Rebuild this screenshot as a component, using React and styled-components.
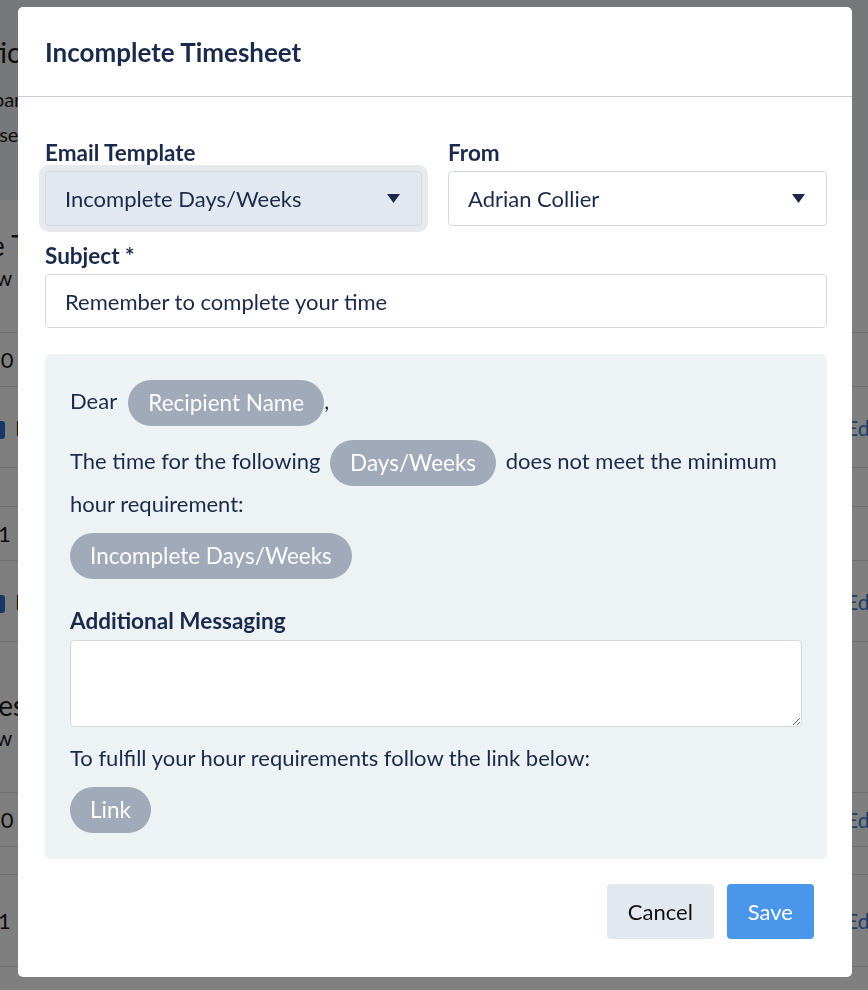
import React from "react";
import styled, { createGlobalStyle } from "styled-components";

const GlobalStyle = createGlobalStyle`
  html, body {
    margin: 0;
    padding: 0;
    overflow: hidden;
    background: #ffffff;
  }
  body {
    font-family: Lato, "Noto Sans", "Liberation Sans", sans-serif;
  }
  * {
    box-sizing: border-box;
  }
`;

const navy = "#1b2a4a";

/* ---------- page behind the modal ---------- */

const Page = styled.div`
  width: 1014px;
  margin-left: -92px;
  color: #1b1b1b;
`;

const Banner = styled.div`
  height: 200px;
  background: #eef0f2;
  padding: 32px 0 0 44px;
`;

const BannerTitle = styled.div`
  font-size: 28px;
  line-height: 40px;
`;

const BannerText = styled.div`
  font-size: 20px;
  line-height: 35px;
  margin-top: ${(p) => p.$gap || 0}px;
`;

const Section = styled.div`
  padding-left: 44px;
`;

const SectionTitle = styled.div`
  font-size: 28px;
  line-height: 34px;
  padding-top: ${(p) => p.$top}px;
`;

const SectionText = styled.div`
  font-size: 21px;
  line-height: 32px;
  padding-bottom: 38px;
  border-bottom: 1px solid #d8dce1;
`;

const Row = styled.div`
  display: flex;
  align-items: center;
  justify-content: space-between;
  height: ${(p) => p.$h}px;
  border-bottom: 1px solid #d8dce1;
  font-size: 22px;
  padding: 0 40px 0 ${(p) => p.$indent || 0}px;
`;

const Check = styled.span`
  display: inline-block;
  width: 18px;
  height: 18px;
  border-radius: 3px;
  background: #2f6fd0;
  margin-right: 10px;
  vertical-align: middle;
`;

const EditLink = styled.span`
  color: #3d7dd8;
  font-size: 21px;
`;

/* ---------- modal ---------- */

const Overlay = styled.div`
  position: fixed;
  inset: 0;
  background: rgba(0, 0, 0, 0.5);
  display: flex;
  justify-content: center;
  align-items: flex-start;
  padding: 7px 0 0 2px;
`;

const Modal = styled.div`
  width: 834px;
  background: #ffffff;
  border-radius: 5px;
  color: ${navy};
`;

const ModalHeader = styled.div`
  height: 90px;
  display: flex;
  align-items: center;
  padding: 0 27px;
  border-bottom: 1px solid #c9ced5;
`;

const Title = styled.h2`
  margin: 0;
  font-size: 26px;
  font-weight: 700;
`;

const ModalBody = styled.div`
  padding: 44px 25px 0 27px;
`;

const FieldGrid = styled.div`
  display: grid;
  grid-template-columns: 377px 1fr;
  column-gap: 26px;
`;

const Label = styled.div`
  font-size: 22.5px;
  font-weight: 700;
  line-height: 24px;
  margin-top: ${(p) => p.$top || 0}px;
  margin-bottom: ${(p) => (p.$bottom == null ? 6 : p.$bottom)}px;
`;

const SelectBox = styled.div`
  height: 55px;
  display: flex;
  align-items: center;
  justify-content: space-between;
  padding: 0 21px 0 19px;
  border: 1px solid #d4d9df;
  border-radius: 4px;
  font-size: 22px;
  background: ${(p) => (p.$focused ? "#e2e8f0" : "#ffffff")};
  box-shadow: ${(p) => (p.$focused ? "0 0 0 6px #e6e9ee" : "none")};
`;

const TextInput = styled.div`
  height: 54px;
  display: flex;
  align-items: center;
  padding: 0 19px;
  border: 1px solid #d4d9df;
  border-radius: 4px;
  font-size: 22px;
`;

const Preview = styled.div`
  margin-top: 26px;
  background: #edf2f5;
  border-radius: 6px;
  padding: 26px 25px 26px 25px;
`;

const Para = styled.div`
  font-size: 22px;
  line-height: 36px;
  margin-top: ${(p) => p.$top || 0}px;
`;

const Pill = styled.span`
  display: inline-block;
  height: 46px;
  line-height: 46px;
  padding: 0 20px;
  border-radius: 23px;
  background: #a0aab8;
  color: #ffffff;
  font-size: 22.5px;
  vertical-align: middle;
  margin: ${(p) => p.$m || "0"};
`;

const MessageArea = styled.textarea`
  display: block;
  width: 100%;
  height: 87px;
  border: 1px solid #d4d9df;
  border-radius: 4px;
  background: #ffffff;
  font-family: inherit;
  font-size: 20px;
  padding: 10px 14px;
  outline: none;
`;

const Footer = styled.div`
  display: flex;
  justify-content: flex-end;
  gap: 13px;
  padding: 25px 38px 38px 0;
`;

const Button = styled.button`
  height: 55px;
  padding: 0 21px;
  border: none;
  border-radius: 4px;
  font-family: inherit;
  font-size: 22px;
  cursor: pointer;
  background: ${(p) => (p.$primary ? "#4a96ea" : "#e2e8f0")};
  color: ${(p) => (p.$primary ? "#ffffff" : "#111111")};
`;

const Caret = () => (
  <svg width="13" height="9" viewBox="0 0 13 9">
    <path d="M0 0 H13 L6.5 9 Z" fill={navy} />
  </svg>
);

const Background = () => (
  <Page>
    <Banner>
      <BannerTitle>Options</BannerTitle>
      <BannerText $gap={10}>Company defaults</BannerText>
      <BannerText>Thes settings apply</BannerText>
    </Banner>
    <Section>
      <SectionTitle $top={28}>Late Timesheets</SectionTitle>
      <SectionText>Fellow employees</SectionText>
      <Row $h={54} $indent={36}>
        <span>10</span>
      </Row>
      <Row $h={81} $indent={35}>
        <span>
          <Check />
          Email
        </span>
        <EditLink>Edit</EditLink>
      </Row>
      <Row $h={39} />
      <Row $h={54} $indent={46}>
        <span>1</span>
      </Row>
      <Row $h={81} $indent={35}>
        <span>
          <Check />
          Email
        </span>
        <EditLink>Edit</EditLink>
      </Row>
    </Section>
    <Section>
      <SectionTitle $top={46}>Timesheets</SectionTitle>
      <SectionText>Fellow</SectionText>
      <Row $h={54} $indent={36}>
        <span>10</span>
        <EditLink>Edit</EditLink>
      </Row>
      <Row $h={28} />
      <Row $h={92} $indent={46}>
        <span>1</span>
        <EditLink>Edit</EditLink>
      </Row>
    </Section>
  </Page>
);

export default function App() {
  return (
    <>
      <GlobalStyle />
      <Background />
      <Overlay>
        <Modal>
          <ModalHeader>
            <Title>Incomplete Timesheet</Title>
          </ModalHeader>
          <ModalBody>
            <FieldGrid>
              <div>
                <Label>Email Template</Label>
                <SelectBox $focused>
                  <span>Incomplete Days/Weeks</span>
                  <Caret />
                </SelectBox>
              </div>
              <div>
                <Label>From</Label>
                <SelectBox>
                  <span>Adrian Collier</span>
                  <Caret />
                </SelectBox>
              </div>
            </FieldGrid>
            <Label $top={18}>Subject *</Label>
            <TextInput>Remember to complete your time</TextInput>
            <Preview>
              <Para>
                Dear <Pill $m="0 0 0 6px">Recipient Name</Pill>,
              </Para>
              <Para $top={14}>
                The time for the following <Pill $m="0 4px 0 4px">Days/Weeks</Pill>{" "}
                does not meet the minimum hour requirement:
              </Para>
              <Para $top={11}>
                <Pill>Incomplete Days/Weeks</Pill>
              </Para>
              <Label $top={30} $bottom={7}>
                Additional Messaging
              </Label>
              <MessageArea />
              <Para $top={13}>To fulfill your hour requirements follow the link below:</Para>
              <Para $top={11}>
                <Pill>Link</Pill>
              </Para>
            </Preview>
          </ModalBody>
          <Footer>
            <Button>Cancel</Button>
            <Button $primary>Save</Button>
          </Footer>
        </Modal>
      </Overlay>
    </>
  );
}
